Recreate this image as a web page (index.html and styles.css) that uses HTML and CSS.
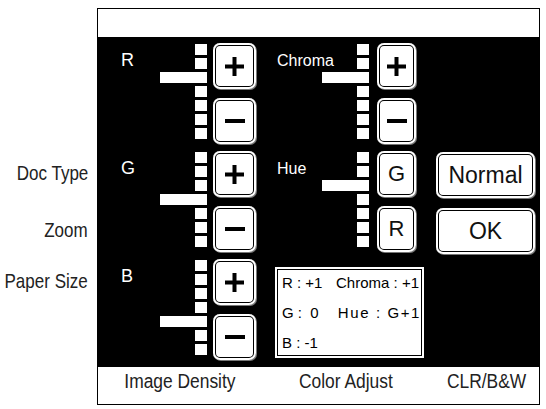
FILE: index.html
```html
<!DOCTYPE html>
<html>
<head>
<meta charset="utf-8">
<link rel="stylesheet" href="styles.css">
</head>
<body>
<div class="screen">
  <div class="side">
    <div class="side-label l-doc"><span class="cond">Doc Type</span></div>
    <div class="side-label l-zoom"><span class="cond">Zoom</span></div>
    <div class="side-label l-paper"><span class="cond">Paper Size</span></div>
  </div>
  <div class="panel">
    <div class="panel-head"></div>
    <div class="panel-body">
      <div class="col col-rgb">
        <div class="section sec-rgb">
          <div class="lbl">R</div>
          <div class="scale">
            <span class="cell"></span><span class="cell"></span><span class="cell on"></span><span class="cell"></span><span class="cell"></span><span class="cell"></span><span class="cell"></span>
          </div>
          <div class="btns">
            <div class="btn"><svg width="19" height="19" viewBox="0 0 19 19"><path d="M7.5 0h4v7.5h7.5v4h-7.5v7.5h-4v-7.5h-7.5v-4h7.5z"/></svg></div>
            <div class="btn"><svg width="20" height="4" viewBox="0 0 20 4"><rect width="20" height="4"/></svg></div>
          </div>
        </div>
        <div class="section sec-rgb">
          <div class="lbl">G</div>
          <div class="scale">
            <span class="cell"></span><span class="cell"></span><span class="cell"></span><span class="cell on"></span><span class="cell"></span><span class="cell"></span><span class="cell"></span>
          </div>
          <div class="btns">
            <div class="btn"><svg width="19" height="19" viewBox="0 0 19 19"><path d="M7.5 0h4v7.5h7.5v4h-7.5v7.5h-4v-7.5h-7.5v-4h7.5z"/></svg></div>
            <div class="btn"><svg width="20" height="4" viewBox="0 0 20 4"><rect width="20" height="4"/></svg></div>
          </div>
        </div>
        <div class="section sec-rgb">
          <div class="lbl">B</div>
          <div class="scale">
            <span class="cell"></span><span class="cell"></span><span class="cell"></span><span class="cell"></span><span class="cell on"></span><span class="cell"></span><span class="cell"></span>
          </div>
          <div class="btns">
            <div class="btn"><svg width="19" height="19" viewBox="0 0 19 19"><path d="M7.5 0h4v7.5h7.5v4h-7.5v7.5h-4v-7.5h-7.5v-4h7.5z"/></svg></div>
            <div class="btn"><svg width="20" height="4" viewBox="0 0 20 4"><rect width="20" height="4"/></svg></div>
          </div>
        </div>
      </div>
      <div class="col col-ch">
        <div class="section sec-ch">
          <div class="lbl lbl-sm">Chroma</div>
          <div class="scale">
            <span class="cell"></span><span class="cell"></span><span class="cell on"></span><span class="cell"></span><span class="cell"></span><span class="cell"></span><span class="cell"></span>
          </div>
          <div class="btns">
            <div class="btn"><svg width="19" height="19" viewBox="0 0 19 19"><path d="M7.5 0h4v7.5h7.5v4h-7.5v7.5h-4v-7.5h-7.5v-4h7.5z"/></svg></div>
            <div class="btn"><svg width="20" height="4" viewBox="0 0 20 4"><rect width="20" height="4"/></svg></div>
          </div>
        </div>
        <div class="section sec-ch">
          <div class="lbl lbl-sm">Hue</div>
          <div class="scale">
            <span class="cell"></span><span class="cell"></span><span class="cell on"></span><span class="cell"></span><span class="cell"></span><span class="cell"></span><span class="cell"></span>
          </div>
          <div class="btns">
            <div class="btn btn-txt">G</div>
            <div class="btn btn-txt">R</div>
          </div>
        </div>
        <div class="info">
          <div class="info-line"><span>R : +1</span><span>Chroma : +1</span></div>
          <div class="info-line"><span>G :&nbsp; 0</span><span class="wide">Hue : G+1</span></div>
          <div class="info-line"><span>B : -1</span></div>
        </div>
      </div>
      <div class="col col-btn">
        <div class="btn btn-wide">Normal</div>
        <div class="btn btn-wide">OK</div>
      </div>
    </div>
    <div class="panel-foot">
      <div class="tab"><span class="cond">Image Density</span></div>
      <div class="tab"><span class="cond">Color Adjust</span></div>
      <div class="tab tab-3"><span class="cond">CLR/B&amp;W</span></div>
    </div>
  </div>
</div>
</body>
</html>
```

FILE: styles.css
```css
html, body {
  margin: 0;
  padding: 0;
  background: #fff;
}

body {
  font-family: "Liberation Sans", Arial, sans-serif;
  color: #000;
}

.screen {
  display: flex;
  width: 546px;
  height: 409px;
}

.side {
  width: 97px;
  display: flex;
  flex-direction: column;
  align-items: flex-end;
  padding-top: 161px;
  box-sizing: border-box;
  padding-right: 9px;
}

.side-label {
  font-size: 21px;
  line-height: 24px;
  color: #222;
  white-space: nowrap;
}

.cond {
  display: inline-block;
  transform: scaleX(0.81);
  transform-origin: right center;
}

.l-zoom { margin-top: 33px; }
.l-paper { margin-top: 27px; }

.panel {
  margin-top: 8px;
  width: 443px;
  height: 397px;
  border: 1px solid #000;
  box-sizing: border-box;
  display: flex;
  flex-direction: column;
}

.panel-head {
  height: 28px;
  background: #fff;
}

.panel-body {
  height: 330px;
  background: #000;
  display: flex;
  padding: 6px 0 0 23px;
  box-sizing: border-box;
}

.col {
  display: flex;
  flex-direction: column;
}

.col-rgb {
  width: 141px;
  gap: 7px;
}

.col-ch {
  width: 149px;
  margin-left: 13px;
  gap: 7px;
}

.col-btn {
  width: 99px;
  margin-left: 12px;
  padding-top: 109px;
  gap: 10px;
}

.section {
  display: grid;
  height: 101px;
}

.sec-rgb {
  grid-template-columns: 39px 47px 49px;
  column-gap: 0;
}

.sec-rgb .btns { margin-left: 6px; }

.sec-ch {
  grid-template-columns: 47px 47px 47px;
}

.sec-ch .btns { margin-left: 8px; }
.sec-ch .lbl { padding-left: 2px; }

.lbl {
  color: #fff;
  font-size: 18px;
  line-height: 20px;
  margin-top: 7px;
}

.lbl-sm {
  font-size: 16px;
  line-height: 18px;
  margin-top: 9px;
}

.scale {
  display: flex;
  flex-direction: column;
  align-items: flex-end;
  gap: 3px;
  padding-top: 1px;
}

.cell {
  display: block;
  width: 12px;
  height: 11px;
  background: #fff;
}

.cell.on {
  width: 47px;
}

.btns {
  display: flex;
  flex-direction: column;
  gap: 9px;
}

.btn {
  height: 46px;
  background: #fff;
  border-radius: 7px;
  box-shadow: inset 0 0 0 2px #fff, inset 0 0 0 3px #000, 1px 1px 0 #777;
  display: flex;
  align-items: center;
  justify-content: center;
}

.btn svg { display: block; fill: #000; }

.btn-txt {
  font-size: 22px;
  color: #111;
}

.btn-wide {
  font-size: 23px;
  color: #111;
}

.info {
  margin-top: 8px;
  height: 91px;
  background: #fff;
  box-shadow: inset 0 0 0 2px #fff, inset 0 0 0 3px #000;
  padding: 1px 5px 0 7px;
  box-sizing: border-box;
}

.info-line {
  display: flex;
  justify-content: space-between;
  font-size: 15px;
  line-height: 30px;
  white-space: pre;
}

.info-line .wide {
  letter-spacing: 1.6px;
  margin-right: -2px;
}

.panel-foot {
  flex: 1;
  background: #fff;
  display: grid;
  grid-template-columns: 164px 168px 1fr;
  padding-top: 2px;
}

.tab {
  font-size: 20px;
  line-height: 24px;
  color: #222;
  text-align: center;
  white-space: nowrap;
}

.tab .cond {
  transform: scaleX(0.87);
  transform-origin: center center;
}

.tab-3 { padding-left: 5px; }
```
